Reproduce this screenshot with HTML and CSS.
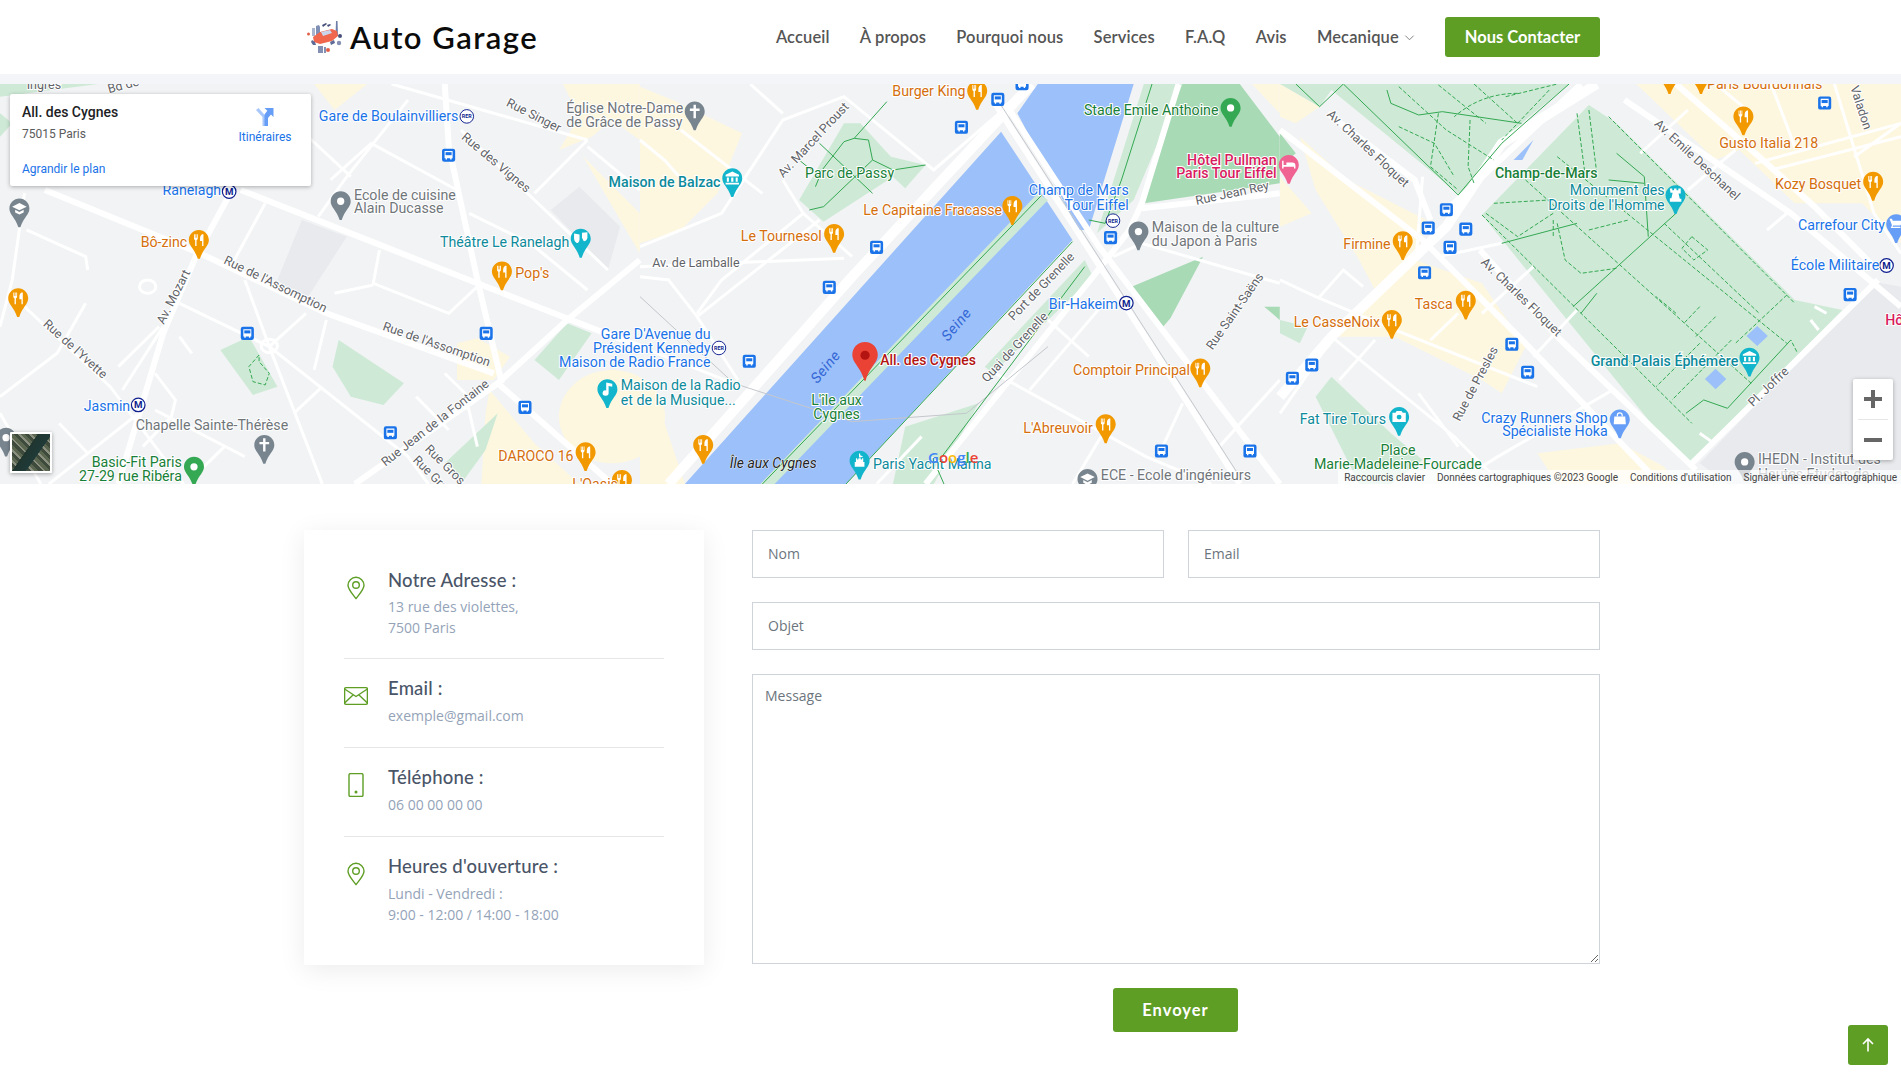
FILE: index.html
```html
<!DOCTYPE html>
<html lang="fr">
<head>
<meta charset="utf-8">
<title>Auto Garage - Contact</title>
<link rel="stylesheet" href="styles.css">
</head>
<body>
<header class="site-header">
  <div class="header-inner">
    <a class="brand" href="#">
      <svg class="brand-logo" viewBox="0 0 36 34" aria-hidden="true">
        <path d="M9 6l3-1 1 2v9H9z" fill="#7f8fb5"/><path d="M5 8h3v8H5z" fill="#a9b4cf"/>
        <path d="M29 1l1.500 0 .5 15h-2.500z" fill="#6d7ea8"/><path d="M15 5l4-2 1 1-4 3z" fill="#47507a"/>
        <path d="M20 5l3-1 1 1-3 2z" fill="#47507a"/>
        <path d="M6 17l7-5 12-3 5 2 1 5-6 5-12 3-6-2z" fill="#f0674d"/>
        <path d="M14 12l9-2 2 3-9 3z" fill="#c9d6ee"/>
        <path d="M5 20l3 2 1 3-3 0-2-3zM23 22l4-2 1 3-4 2z" fill="#5d6b96"/>
        <path d="M11 26h5v7h-5zM17 27h2v6h-2z" fill="#8490b3"/><circle cx="21" cy="30" r="2" fill="#e2604a"/>
        <circle cx="33" cy="16" r="2" fill="#47507a"/><circle cx="32" cy="23" r="2.200" fill="#8490b3"/><circle cx="1.500" cy="14" r="1.500" fill="#e2604a"/>
      </svg>
      <span class="brand-name">Auto Garage</span>
    </a>
    <nav class="nav">
      <a href="#">Accueil</a>
      <a href="#">À propos</a>
      <a href="#">Pourquoi nous</a>
      <a href="#">Services</a>
      <a href="#">F.A.Q</a>
      <a href="#">Avis</a>
      <a href="#" class="dropdown">Mecanique
        <svg class="caret" viewBox="0 0 12 12" aria-hidden="true"><path d="M1.500 4l4.500 4.500L10.500 4" fill="none" stroke="#777" stroke-width="1"/></svg>
      </a>
      <a href="#" class="nav-cta">Nous Contacter</a>
    </nav>
  </div>
</header>

<section class="map-band">
  <div class="map">
    <svg class="map-svg" viewBox="0 84 1901 400" width="1901" height="400" aria-label="Plan">
      <defs>
        <path id="pin" d="M0-8.250C-4.600-8.250-8.250-4.600-8.250 0c0 5 4.600 7 7.400 15.500h1.700C3.650 7 8.250 5 8.250 0 8.250-4.600 4.600-8.250 0-8.250z"/>
        <g id="food"><use href="#pin"/><path fill="#fff" d="M-4-4.800v3.600a1.500 1.500 0 0 0 1 1.400V5h1.100V.2a1.500 1.500 0 0 0 1-1.400v-3.600h-.7v3h-.5v-3h-.7v3h-.5v-3zM2.800-4.800C1.500-4.400 1-2.700 1-1.200v2h1.700V5h1.100v-9.800z"/></g>
        <g id="dot"><use href="#pin"/><circle r="3" fill="#fff"/></g>
        <g id="cap"><use href="#pin"/><path fill="#fff" d="M0-4.500L6-1.500 0 1.500-6-1.500zM-3.500 1v2.200L0 5l3.500-1.800V1L0 2.800z"/></g>
        <g id="cross"><use href="#pin"/><path fill="#fff" d="M-1-5.500h2v3h3v2H1v6h-2v-6h-3v-2h3z"/></g>
        <g id="museum"><use href="#pin"/><path fill="#fff" d="M0-5.500L5.500-2.800v1.300h-11v-1.300zM-4.500-.5h1.700v3.500h-1.700zM-.9-.5H.9v3.500H-.9zM2.800-.5h1.700v3.500H2.800zM-5.500 3.800h11v1.400h-11z"/></g>
        <g id="mask"><use href="#pin"/><path fill="#fff" d="M-5.500-4.500l4.500 1v4c0 2-1.500 3-2 3s-2.500-1.500-2.500-3.500zM1-5l4.500-.5V-1c0 1.500-1.500 3-3 3L1-1z"/></g>
        <g id="music"><use href="#pin"/><path fill="#fff" d="M-1-5.500L4-4.500v2.500L1-2.700V3a2.500 2.200 0 1 1-2-2z"/></g>
        <g id="tower"><use href="#pin"/><path fill="#fff" d="M-4.500-5.500h2v1.500h1.500v-1.500h2v1.500h1.500v-1.500h2v4h-1.800l1 4.500h1.300v2.500h-9.500V2.500h1.300l1-4.500h-1.800z" transform="translate(-.2 0)"/></g>
        <g id="castle"><use href="#pin"/><path fill="#fff" d="M-.5-6h1v1.500L3-3.500l-3 1-.5-.5zM-3-2h1v1h1v-1h2v1h1v-1h1v3h1v4h-8V1h1z"/></g>
        <g id="camera"><use href="#pin"/><path fill="#fff" d="M-5.500-3.500h2.500l1-1.500h4l1 1.500h2.500v7.500h-11z"/><circle cy="0" r="2" fill="currentColor"/></g>
        <g id="bag"><use href="#pin"/><path fill="none" stroke="#fff" stroke-width="1" d="M-2-2.500v-1a2 2 0 0 1 4 0v1"/><path fill="#fff" d="M-4.500-2.500h9l.5 6.500h-10z"/></g>
        <g id="cart"><use href="#pin"/><path fill="#fff" d="M-5.500-4.500h2l.7 1.500h8L3.500 1h-6l-.5 1h6.500v1h-8l1-2.200-2-5.300h-1z"/></g>
        <g id="bed"><use href="#pin"/><path fill="#fff" d="M-5.500-3.500h1.200v3.500h2.300v-2h5c1.500 0 2.500 1 2.500 2.500V3h-1.200V1.500h-8.600V3h-1.200z"/></g>
        <g id="bus"><rect x="-5.400" y="-5.400" width="10.800" height="10.800" rx="1.800" fill="#1a73e8"/><path fill="#fff" d="M-3.300-3.500h6.600v6h-.8v1h-1.200v-1H-1.300v1h-1.200v-1h-.8z"/><path fill="#1a73e8" d="M-2.500-2.500h5V0h-5z"/></g>
        <g id="metro"><circle r="5.600" fill="#fff" stroke="#0f1f8f" stroke-width="1"/><text class="badge-m" y="2.900">M</text></g>
        <g id="rer"><circle r="5.600" fill="#fff" stroke="#0f1f8f" stroke-width=".8"/><text class="badge-r" y="1.700">RER</text></g>
      </defs>

      <rect x="0" y="84" width="1901" height="400" fill="#f1f3f4"/>

      <g transform="translate(0 80) scale(.408 .3333)">
        <path class="yl" d="M1380 12H1568V180L1500 120 1450 170 1370 210 1420 110zM1120 790L1170 775 1250 830 1210 900 1120 900zM1200 930L1310 1090 1420 1212 1180 1212 1190 1000zM770 12H900L820 90zM1430 230L1568 400V520L1420 210z"/>
        <ellipse class="yl" cx="1500" cy="1010" rx="130" ry="140"/>
        <path class="pk" d="M830 780L990 910 940 975 860 950 815 860zM540 810L610 770 680 920 620 945zM1390 730L1450 760 1370 900 1310 840zM1090 1150L1220 1000 1190 1110 1130 1212zM0 12H60L240 12 0 50zM0 100L30 130 0 170z"/>
        <path class="bk" d="M740 420L850 470 750 660 680 600zM1420 320L1520 440 1490 570 1350 390z"/>
        <g class="r2">
          <path d="M590 330L880 470 1170 610 1400 720 1568 800"/>
          <path d="M110 330L490 520 800 700 1210 880"/>
          <path d="M560 350L480 530 400 760 290 1212"/>
          <path d="M1090 12L1100 200 1170 600 1230 910"/>
          <path d="M1568 540L1390 720 1220 910 870 1212"/>
          <path d="M1220 910L1500 1212"/>
        </g>
        <g class="r1">
          <path d="M650 370L570 550"/><path d="M600 600L660 800 790 1212"/><path d="M440 670L660 800 1000 1130 1050 1212"/>
          <path d="M660 800L750 700"/><path d="M800 720L770 870"/><path d="M720 1000L790 920"/>
          <path d="M60 680L270 920 450 1212"/><path d="M0 950L140 820 210 670"/><path d="M60 340L30 600 0 740"/>
          <path d="M290 860L390 740"/><path d="M810 300L910 190 1120 330"/><path d="M1000 60L850 290 780 410"/>
          <path d="M960 12L1440 180"/><path d="M1130 150L1490 570"/><path d="M1440 180L1310 340"/><path d="M1440 200L1568 330"/>
          <path d="M1150 400L1300 490 1440 630"/><path d="M930 510L915 610 1100 700 1170 620"/><path d="M720 130L860 290"/>
          <path d="M65 450L210 530 215 570"/><path d="M820 640L915 615"/><path d="M0 1000L100 1212"/><path d="M300 930L400 740"/>
          <path d="M380 880L430 960 420 1010 350 1100"/><path d="M145 1030L215 1120"/><path d="M120 1212L350 990"/><path d="M470 820L440 770"/>
          <path d="M1090 880L1140 940 1170 1100"/><path d="M1020 950L1100 1050"/><path d="M380 990L600 1130"/><path d="M500 1160L550 1100"/>
        </g>
        <circle class="ring" cx="660" cy="798" r="20"/>
        <circle class="ring" cx="362" cy="620" r="20"/>
        <path class="gd" d="M635 825L610 860 620 905 650 915 660 880 635 845z"/>
      </g>

      <g transform="translate(640 80) scale(.408 .3333)">
        <path class="yl" d="M0 20L80 60 250 160 190 340 100 450 0 490zM0 1000L60 1030 110 1212 0 1212zM1500 12H1568V100z"/>
        <path class="pk" d="M390 360L500 130 540 130 615 230 700 255 650 325 620 290 450 425zM845 860L1090 540 1110 590 865 880zM650 1040L830 970 720 1212 620 1212z"/>
        <path class="pd" d="M1320 12H1470L1568 170V310L1235 370zM1380 530L1205 620 1275 750 1300 715zM1530 680L1568 720V680z"/>
        <path class="wt" d="M110 1212L885 155 1060 480 505 1212zM975 12H1210L1100 450 1075 450 925 100z"/>
        <path class="pk" d="M295 1212L975 340 1000 360 330 1212zM1235 12H1330L1210 360 1120 460z"/>
        <g class="r3">
          <path d="M70 1212L520 590 885 110 960 12"/>
        </g>
        <g class="r2">
          <path d="M870 70L1470 1212"/><path d="M895 70L1125 500 1568 1212"/>
          <path d="M700 1212L1110 590 1200 450 1230 370 1320 12"/>
          <path d="M1230 385L1568 340"/>
        </g>
        <g class="r1">
          <path d="M1160 530L1230 490 1568 610"/><path d="M870 880L1240 1130 1400 1212"/><path d="M955 930L1130 680"/>
          <path d="M1000 720L1100 830"/><path d="M1270 1130L1330 970"/><path d="M1420 1100L1568 900"/><path d="M1130 1070L1060 1212"/>
          <path d="M0 500L200 400 350 120 500 50 720 270 880 100"/><path d="M0 560L500 535"/><path d="M0 590L70 600 140 710 240 900"/>
          <path d="M140 710L440 420"/><path d="M400 400L520 530"/><path d="M350 300L400 400 200 600 140 700"/><path d="M270 12L350 100"/>
          <path d="M0 180L60 240 110 310"/><path d="M100 150L300 340"/><path d="M0 800L250 920"/><path d="M580 1212L690 1070"/>
        </g>
        <path class="rail" d="M0 650L230 910 520 1025 800 1000 1000 800"/>
        <path class="rail" d="M882 70L1470 1190"/>
        <g class="gs">
          <path d="M415 390L450 380 570 240 560 180 525 175 500 185 440 280"/><path d="M440 190L570 340"/><path d="M570 240L620 270 700 255"/>
          <path d="M605 65L525 175"/><path d="M430 320L440 290 380 230"/>
          <path d="M300 1212L985 345"/><path d="M505 1212L1060 485"/><path d="M740 1130L1090 560"/>
          <path d="M1255 12L1180 300 1140 430 1100 420"/><path d="M730 1170L745 1212"/>
        </g>
      </g>

      <g transform="translate(1280 80) scale(.396 .3333)">
        <path class="yl" d="M0 12L100 80 40 130 0 110zM900 12L1100 240 1160 210 1300 370 1470 370 1568 490V12zM50 170L170 300 370 420 340 540 510 610 620 800 560 940 510 900 290 770 140 770 240 630 200 540 90 330zM0 290L80 400 0 440zM650 1120L860 1090 970 1160 1000 1212H700z"/>
        <path class="pk" d="M0 12H730L610 130 455 345 130 30 100 80zM510 405L780 75 850 130 1300 660 1420 690 1040 1150 975 1085zM90 950L130 890 280 1060 360 1140 280 1212H200zM0 720L70 740 50 790 0 760z"/>
        <path class="pd" d="M0 160L40 220 0 260z"/>
        <path class="bk" d="M1568 620L1500 605 1060 1150 1130 1212H1568z"/>
        <path class="wt" d="M590 240L640 180 612 240zM1205 738L1232 768 1205 798 1178 768zM1100 866L1127 897 1100 928 1073 897z"/>
        <g class="r3">
          <path d="M800 12L560 190 420 440 130 770 0 950"/>
        </g>
        <g class="r2">
          <path d="M0 150L360 480 620 790 960 1212"/><path d="M505 510L700 770 1050 1170"/><path d="M120 100L340 300 380 420"/>
          <path d="M1510 600L1040 1150"/><path d="M870 60L1290 400 1568 680"/><path d="M1000 12L1210 230 1350 380 1500 560"/>
          <path d="M760 12L430 380"/>
        </g>
        <g class="r1">
          <path d="M1400 12L1500 400 1568 520"/><path d="M1200 250L1568 130"/><path d="M1240 270L1568 170"/><path d="M1150 210L1030 330"/>
          <path d="M910 220L1030 90"/><path d="M1230 450L1290 390"/><path d="M510 700L640 560"/><path d="M640 830L750 690"/><path d="M380 780L450 700"/>
          <path d="M840 930L550 1130 440 1212"/><path d="M240 780L150 900"/><path d="M360 290L345 520"/><path d="M0 600L90 650 290 750 650 920"/>
          <path d="M130 770L440 1070 560 1212"/><path d="M350 940L450 1100"/><path d="M1100 12L1190 100"/><path d="M1240 12L1300 200"/><path d="M1450 230L1568 130"/>
          <path d="M0 1000L130 780"/><path d="M400 530L560 490"/><path d="M100 650L160 570 210 620"/>
          <path d="M1350 680L1380 700"/><path d="M1340 720L1360 750"/><path d="M1060 1060L1090 1085"/>
        </g>
        <g class="gs">
          <path d="M40 12L100 80 160 12"/><path d="M160 12L450 345 560 190 730 12"/><path d="M270 30L280 70 350 105 410 95 610 130"/>
          <path d="M740 680L1000 400"/><path d="M760 700L800 640"/><path d="M1290 780L1130 985 1070 960 1025 1000"/><path d="M560 490L750 430"/>
          <path d="M850 220L920 290 930 470"/><path d="M830 300L920 310"/>
        </g>
        <g class="gd">
          <path d="M510 405L1040 1030"/><path d="M620 300L1190 910"/><path d="M700 230L1280 790"/><path d="M830 110L1300 670"/><path d="M970 430L1210 700"/>
          <path d="M1000 700L950 650"/><path d="M1060 680L1020 730"/><path d="M1100 710L1050 770"/><path d="M1060 790L950 920"/><path d="M1140 780L990 960"/>
          <path d="M1280 645L1150 790"/><path d="M1305 815L1290 780"/><path d="M400 100L380 260 450 330"/><path d="M480 120L475 260 490 310"/>
          <path d="M520 400L600 470 690 400"/><path d="M700 430L720 540 760 580 850 565"/><path d="M1040 470L1015 505 1045 540 1080 510z"/>
          <path d="M300 140L390 190 440 290"/><path d="M750 100L770 280"/><path d="M780 90L800 280"/><path d="M490 12L600 130"/><path d="M570 50L700 12"/>
          <path d="M540 370L680 360"/><path d="M690 420L690 470"/><path d="M780 450L880 420"/>
          <path d="M300 20L420 150 540 240"/><path d="M400 15L520 130"/><path d="M600 40C520 40 470 80 440 110"/><path d="M680 30L560 180"/>
        </g>
      </g>

      <g transform="scale(1.2124)">
        <g class="poi-o">
          <use href="#food" x="164" y="198"/><use href="#food" x="15" y="246"/><use href="#food" x="414" y="224"/><use href="#food" x="483" y="373"/>
          <use href="#food" x="513" y="396"/><use href="#food" x="580" y="367"/><use href="#food" x="806" y="75"/><use href="#food" x="688" y="193"/>
          <use href="#food" x="835" y="170"/><use href="#food" x="990" y="304"/><use href="#food" x="912" y="350"/><use href="#food" x="1157" y="199"/>
          <use href="#food" x="1209" y="248"/><use href="#food" x="1148" y="264"/><use href="#food" x="1438" y="96"/><use href="#food" x="1545" y="150"/>
          <use href="#food" x="1377" y="62"/><use href="#food" x="1403" y="62"/>
        </g>
        <g class="poi-g">
          <use href="#dot" x="281" y="166"/><use href="#cap" x="16" y="172"/><use href="#cross" x="573" y="92"/><use href="#cross" x="218" y="367"/>
          <use href="#dot" x="5" y="361"/><use href="#dot" x="939" y="191"/><use href="#dot" x="1439" y="381"/><use href="#cap" x="897" y="395"/>
        </g>
        <g class="poi-t">
          <use href="#mask" x="479" y="197"/><use href="#museum" x="604" y="147"/><use href="#music" x="501" y="321"/><use href="#castle" x="709" y="380"/>
          <use href="#tower" x="1382" y="161"/><use href="#museum" x="1443" y="295"/><use href="#camera" x="1154" y="344"/>
        </g>
        <g class="poi-v"><use href="#dot" x="1015" y="89"/><use href="#dot" x="160" y="385"/></g>
        <g class="poi-b"><use href="#bag" x="1336" y="346"/><use href="#cart" x="1564" y="185"/></g>
        <g class="poi-p"><use href="#bed" x="1063" y="136"/></g>

        <g>
          <use href="#bus" x="370" y="128"/><use href="#bus" x="204" y="275"/><use href="#bus" x="401" y="275"/><use href="#bus" x="322" y="357"/>
          <use href="#bus" x="433" y="336"/><use href="#bus" x="618" y="298"/><use href="#bus" x="684" y="237"/><use href="#bus" x="723" y="204"/>
          <use href="#bus" x="793" y="105"/><use href="#bus" x="823" y="82"/><use href="#bus" x="843" y="69"/><use href="#bus" x="916" y="196"/>
          <use href="#bus" x="1175" y="225"/><use href="#bus" x="1193" y="173"/><use href="#bus" x="1178" y="188"/><use href="#bus" x="1209" y="189"/>
          <use href="#bus" x="1196" y="204"/><use href="#bus" x="1247" y="284"/><use href="#bus" x="1260" y="307"/><use href="#bus" x="1082" y="301"/>
          <use href="#bus" x="1066" y="312"/><use href="#bus" x="1031" y="372"/><use href="#bus" x="958" y="372"/><use href="#bus" x="1505" y="85"/>
          <use href="#bus" x="1526" y="243"/>
        </g>
        <use href="#rer" x="385" y="96"/><use href="#metro" x="189" y="158"/><use href="#rer" x="593" y="287"/><use href="#metro" x="114" y="334"/>
        <use href="#metro" x="929" y="250"/><use href="#rer" x="918" y="182"/><use href="#metro" x="1556" y="219"/>

        <g class="rd">
          <text x="184" y="217" transform="rotate(26 184 217)">Rue de l'Assomption</text>
          <text x="315" y="272" transform="rotate(19 315 272)">Rue de l'Assomption</text>
          <text x="135" y="268" transform="rotate(-63 135 268)">Av. Mozart</text>
          <text x="35" y="268" transform="rotate(42 35 268)">Rue de l'Yvette</text>
          <text x="318" y="385" transform="rotate(-38 318 385)">Rue Jean de la Fontaine</text>
          <text x="350" y="371" transform="rotate(45 350 371)">Rue Gros</text>
          <text x="340" y="380" transform="rotate(45 340 380)">Rue Gros</text>
          <text x="417" y="87" transform="rotate(27 417 87)">Rue Singer</text>
          <text x="380" y="114" transform="rotate(40 380 114)">Rue des Vignes</text>
          <text x="646" y="147" transform="rotate(-47 646 147)">Av. Marcel Proust</text>
          <text x="538" y="220">Av. de Lamballe</text>
          <text x="987" y="169" transform="rotate(-12 987 169)">Rue Jean Rey</text>
          <text x="836" y="265" transform="rotate(-46 836 265)">Port de Grenelle</text>
          <text x="814" y="316" transform="rotate(-47 814 316)">Quai de Grenelle</text>
          <text x="1000" y="289" transform="rotate(-55 1000 289)">Rue Saint-Saëns</text>
          <text x="1094" y="95" transform="rotate(43 1094 95)">Av. Charles Floquet</text>
          <text x="1221" y="217" transform="rotate(44 1221 217)">Av. Charles Floquet</text>
          <text x="1364" y="103" transform="rotate(43 1364 103)">Av. Emile Deschanel</text>
          <text x="1204" y="348" transform="rotate(-62 1204 348)">Rue de Presles</text>
          <text x="1446" y="336" transform="rotate(-44 1446 336)">Pl. Joffre</text>
          <text x="1526" y="72" transform="rotate(72 1526 72)">Valadon</text>
          <text x="90" y="77" transform="rotate(-15 90 77)">Bd de</text>
          <text x="22" y="73">Ingres</text>
        </g>
        <g class="lb blue">
          <text x="263" y="100">Gare de Boulainvilliers</text><text x="134" y="161">Ranelagh</text>
          <text class="end" x="586" y="280">Gare D'Avenue du</text><text class="end" x="586" y="291">Président Kennedy</text><text class="end" x="586" y="303">Maison de Radio France</text>
          <text x="69" y="339">Jasmin</text><text x="865" y="255">Bir-Hakeim</text>
          <text class="end" x="931" y="161">Champ de Mars</text><text class="end" x="931" y="173">Tour Eiffel</text>
          <text x="1477" y="223">École Militaire</text><text x="1483" y="190">Carrefour City</text>
          <text class="end" x="1326" y="349">Crazy Runners Shop</text><text class="end" x="1326" y="360">Spécialiste Hoka</text>
        </g>
        <g class="lb orange">
          <text x="116" y="204">Bô-zinc</text><text x="425" y="229">Pop's</text><text x="411" y="380">DAROCO 16</text><text x="736" y="79">Burger King</text>
          <text x="611" y="199">Le Tournesol</text><text x="712" y="177">Le Capitaine Fracasse</text><text x="885" y="309">Comptoir Principal</text>
          <text x="844" y="357">L'Abreuvoir</text><text x="1108" y="205">Firmine</text><text x="1167" y="255">Tasca</text><text x="1067" y="270">Le CasseNoix</text>
          <text x="1418" y="122">Gusto Italia 218</text><text x="1464" y="156">Kozy Bosquet</text><text x="1408" y="73">Paris Bourdonnais</text><text x="472" y="403">L'Oasis</text>
        </g>
        <g class="lb grey">
          <text x="467" y="93">Église Notre-Dame</text><text x="467" y="105">de Grâce de Passy</text>
          <text x="292" y="165">Ecole de cuisine</text><text x="292" y="176">Alain Ducasse</text>
          <text x="112" y="355">Chapelle Sainte-Thérèse</text>
          <text x="950" y="191">Maison de la culture</text><text x="950" y="203">du Japon à Paris</text>
          <text x="1450" y="383">IHEDN - Institut des</text><text x="1450" y="395">Hautes Etudes de</text>
          <text x="908" y="396">ECE - Ecole d'ingénieurs</text>
        </g>
        <g class="lb green">
          <text class="end" x="150" y="385">Basic-Fit Paris</text><text class="end" x="150" y="397">27-29 rue Ribéra</text>
          <text x="894" y="95">Stade Emile Anthoine</text><text x="664" y="147">Parc de Passy</text>
          <text class="mid" x="690" y="334">L'île aux</text><text class="mid" x="690" y="346">Cygnes</text>
          <text class="mid" x="1153" y="375">Place</text><text class="mid" x="1153" y="387">Marie-Madeleine-Fourcade</text>
          <text class="strong" x="1233" y="147">Champ-de-Mars</text>
        </g>
        <g class="lb teal">
          <text class="strong" x="502" y="154">Maison de Balzac</text><text x="363" y="204">Théâtre Le Ranelagh</text>
          <text x="512" y="322">Maison de la Radio</text><text x="512" y="334">et de la Musique...</text>
          <text x="720" y="387">Paris Yacht Marina</text>
          <text class="end" x="1373" y="161">Monument des</text><text class="end" x="1373" y="173">Droits de l'Homme</text>
          <text class="strong" x="1312" y="302">Grand Palais Éphémère</text><text x="1072" y="350">Fat Tire Tours</text>
        </g>
        <g class="lb pink">
          <text class="end strong" x="1053" y="136">Hôtel Pullman</text><text class="end strong" x="1053" y="147">Paris Tour Eiffel</text>
          <text class="strong" x="1555" y="268">Hôtel</text>
        </g>
        <g class="seine">
          <text x="674" y="317" transform="rotate(-50 674 317)">Seine</text>
          <text x="782" y="282" transform="rotate(-50 782 282)">Seine</text>
        </g>
        <text class="isle" x="602" y="386">Île aux Cygnes</text>
        <text class="lb-red" x="726" y="301">All. des Cygnes</text>
        <path d="M713.500 282c-6.200 0-10.500 5-10.500 10.500 0 7 7 10 10 21.500h1c3-11.500 10-14.500 10-21.500 0-5.500-4.300-10.500-10.500-10.500z" fill="#ea4335"/>
        <circle cx="713.500" cy="293" r="3.800" fill="#b31412"/>
      </g>

      <text class="gl" x="928" y="463"><tspan class="g-b">G</tspan><tspan class="g-r">o</tspan><tspan class="g-y">o</tspan><tspan class="g-b">g</tspan><tspan class="g-g">l</tspan><tspan class="g-r">e</tspan></text>
    </svg>

    <div class="info-card">
      <div class="info-main">
        <div class="info-title">All. des Cygnes</div>
        <div class="info-addr">75015 Paris</div>
        <a class="info-link" href="#">Agrandir le plan</a>
      </div>
      <a class="info-dir" href="#">
        <svg class="dir-icon" viewBox="0 0 18 18" aria-hidden="true">
          <path d="M1 2l6.500 7v9h3.500V8.500L3.500 0z" fill="#a8c7fa" transform="translate(-1 0)"/>
          <path d="M7 18h3.500v-8l3-3.500 2.500 2.500V0H7l2.800 2.800L7 6.500z" fill="#669df6" transform="translate(1.500 0)"/>
        </svg>
        <span>Itinéraires</span>
      </a>
    </div>
    <div class="sat-thumb"></div>
    <div class="zoom-ctrl">
      <button class="zoom-btn" type="button" aria-label="Zoom avant"><svg viewBox="0 0 18 18"><path d="M7 0h4v7h7v4h-7v7H7v-7H0V7h7z" fill="#666"/></svg></button>
      <span class="zoom-sep"></span>
      <button class="zoom-btn" type="button" aria-label="Zoom arrière"><svg viewBox="0 0 18 18"><path d="M0 7h18v4H0z" fill="#666"/></svg></button>
    </div>
    <div class="attrib">
      <span>Raccourcis clavier</span><span>Données cartographiques ©2023 Google</span><span>Conditions d'utilisation</span><span>Signaler une erreur cartographique</span>
    </div>
  </div>
</section>

<main class="contact">
  <aside class="contact-card">
    <div class="info-row">
      <svg class="ci" viewBox="0 0 24 24" aria-hidden="true"><path d="M12 22.500C8 17.500 4 13.500 4 9.300a8 8 0 0 1 16 0c0 4.200-4 8.200-8 13.200z"/><circle cx="12" cy="9" r="3.300"/></svg>
      <div class="info-text"><h3>Notre Adresse :</h3><p>13 rue des violettes,<br>7500 Paris</p></div>
    </div>
    <div class="info-row">
      <svg class="ci" viewBox="0 0 24 24" aria-hidden="true"><rect x=".6" y="3.600" width="22.800" height="16.800" rx="1.500"/><path d="M.6 5L12 12.500 23.400 5M.6 19L9 11M23.400 19L15 11"/></svg>
      <div class="info-text"><h3>Email :</h3><p>exemple@gmail.com</p></div>
    </div>
    <div class="info-row">
      <svg class="ci" viewBox="0 0 24 24" aria-hidden="true"><rect x="5" y=".6" width="14" height="22.800" rx="1.500"/><circle class="fill" cx="12" cy="19" r=".8"/></svg>
      <div class="info-text"><h3>Téléphone :</h3><p>06 00 00 00 00</p></div>
    </div>
    <div class="info-row">
      <svg class="ci" viewBox="0 0 24 24" aria-hidden="true"><path d="M12 22.500C8 17.500 4 13.500 4 9.300a8 8 0 0 1 16 0c0 4.200-4 8.200-8 13.200z"/><circle cx="12" cy="9" r="3.300"/></svg>
      <div class="info-text"><h3>Heures d'ouverture :</h3><p>Lundi - Vendredi :<br>9:00 - 12:00 / 14:00 - 18:00</p></div>
    </div>
  </aside>

  <form class="contact-form">
    <div class="form-grid">
      <input class="field" type="text" placeholder="Nom">
      <input class="field" type="email" placeholder="Email">
      <input class="field span" type="text" placeholder="Objet">
      <textarea class="field area span" placeholder="Message"></textarea>
    </div>
    <div class="form-actions"><button class="send" type="button">Envoyer</button></div>
  </form>
</main>

<a class="to-top" href="#" aria-label="Haut de page">
  <svg viewBox="0 0 16 16"><path d="M8 14.500V2M3 7l5-5 5 5" fill="none" stroke="#fff" stroke-width="1.600"/></svg>
</a>
</body>
</html>
```

FILE: styles.css
```css
* { box-sizing: border-box; }
html, body { margin: 0; padding: 0; }
body {
  background: #fff;
  font-family: "Open Sans", sans-serif;
  font-size: 14px;
  color: #4b5563;
  height: 1080px;
  overflow: hidden;
}
a { text-decoration: none; color: inherit; }

.site-header { height: 74px; background: #fff; }
.header-inner {
  margin: 0 301px 0 304px;
  height: 100%;
  display: flex;
  align-items: center;
  justify-content: space-between;
}
.brand { display: flex; align-items: center; gap: 7px; padding-left: 3px; }
.brand-logo { width: 36px; height: 34px; flex: none; }
.brand-name {
  font-family: "Lato", sans-serif;
  font-size: 31px;
  font-weight: 600;
  letter-spacing: 1.450px;
  color: #0b0b0b;
}
.nav {
  display: flex;
  align-items: center;
  gap: 30.200px;
  font-family: "Lato", sans-serif;
  font-size: 16.500px;
  font-weight: 600;
  letter-spacing: .12px;
  color: #555;
}
.dropdown { display: flex; align-items: center; gap: 5px; }
.caret { width: 11px; height: 11px; }
.nav-cta {
  width: 155px;
  height: 40px;
  display: flex;
  align-items: center;
  justify-content: center;
  background: #5e9e25;
  border-radius: 3px;
  color: #fff;
  font-weight: 700;
  letter-spacing: 0;
}

.map-band { padding-top: 10px; background: #f3f5f8; }
.map { position: relative; height: 400px; overflow: hidden; background: #f1f3f4; }
.map-svg { display: block; font-family: "Roboto", sans-serif; }

.yl { fill: #fef7e0; }
.pk { fill: #ceead6; }
.pd { fill: #a8dab5; }
.wt { fill: #9cc0f9; }
.bk { fill: #e8eaed; }
.r1 path, .r2 path, .r3 path, .ring, .rail, .gs path, .gd, .gd path {
  fill: none;
  vector-effect: non-scaling-stroke;
}
.r1 path { stroke: #fff; stroke-width: 3px; }
.r2 path { stroke: #fff; stroke-width: 6px; }
.r3 path { stroke: #fff; stroke-width: 10px; }
.ring { stroke: #fff; stroke-width: 3px; }
.rail { stroke: #c4c7cc; stroke-width: 1px; }
.gs path { stroke: #34a853; stroke-width: 1px; }
.gd, .gd path { stroke: #34a853; stroke-width: 1px; stroke-dasharray: 4 2; }

.poi-o { fill: #f29900; color: #f29900; }
.poi-g { fill: #78858f; color: #78858f; }
.poi-t { fill: #12b5cb; color: #12b5cb; }
.poi-v { fill: #34a853; color: #34a853; }
.poi-b { fill: #669df6; color: #669df6; }
.poi-p { fill: #f06292; color: #f06292; }

.badge-m { font-size: 8px; font-weight: 700; text-anchor: middle; fill: #0f1f8f; }
.badge-r { font-size: 4.400px; font-weight: 700; text-anchor: middle; fill: #0f1f8f; }

.rd text {
  font-size: 10.300px;
  fill: #5f6368;
  stroke: #fff;
  stroke-width: 1.600px;
  paint-order: stroke;
}
.lb text {
  font-size: 11.700px;
  stroke: #fff;
  stroke-width: 1.600px;
  paint-order: stroke;
}
.lb .end { text-anchor: end; }
.lb .mid { text-anchor: middle; }
.lb .strong { font-weight: 500; }
.blue text { fill: #1a73e8; }
.orange text { fill: #d56e0c; }
.grey text { fill: #70757a; }
.green text { fill: #188038; }
.teal text { fill: #0d8a9b; }
.pink text { fill: #d81b60; }
.seine text { font-size: 12px; font-style: italic; fill: #3367d6; letter-spacing: .5px; }
.isle {
  font-size: 11.500px;
  font-style: italic;
  fill: #202124;
  stroke: #fff;
  stroke-width: .6px;
  paint-order: stroke;
}
.lb-red {
  font-size: 11.500px;
  font-weight: 500;
  fill: #b31412;
  stroke: #fff;
  stroke-width: 1.600px;
  paint-order: stroke;
}
.gl { font-family: "Open Sans", sans-serif; font-size: 15px; font-weight: 600; }
.g-b { fill: #4285f4; }
.g-r { fill: #ea4335; }
.g-y { fill: #fbbc05; }
.g-g { fill: #34a853; }

.info-card {
  position: absolute;
  left: 10px;
  top: 10px;
  width: 301px;
  height: 92px;
  padding: 9px 12px;
  display: flex;
  justify-content: space-between;
  background: #fff;
  border-radius: 2px;
  box-shadow: 0 1px 4px rgba(0, 0, 0, .3);
  font-family: "Roboto", sans-serif;
}
.info-title { font-size: 14px; font-weight: 500; line-height: 18px; color: #202124; }
.info-addr { margin-top: 5px; font-size: 12px; line-height: 16px; color: #5b5b5b; }
.info-link { display: block; margin-top: 19px; font-size: 12px; line-height: 16px; color: #1a73e8; }
.info-dir {
  width: 60px;
  margin-right: 4px;
  display: flex;
  flex-direction: column;
  align-items: center;
  font-size: 12px;
  line-height: 16px;
  color: #1a73e8;
}
.dir-icon { width: 18px; height: 18px; margin: 5px 0 3px; }
.sat-thumb {
  position: absolute;
  left: 10px;
  top: 348px;
  width: 42px;
  height: 41px;
  border: 2px solid #fff;
  border-radius: 1px;
  background:
    linear-gradient(125deg, transparent 40%, #20352f 41%, #1f3a38 62%, transparent 63%),
    repeating-linear-gradient(45deg, #5a6650 0 3px, #3e4a3c 3px 6px, #8a8f80 6px 8px);
  box-shadow: 0 1px 4px rgba(0, 0, 0, .35);
}
.zoom-ctrl {
  position: absolute;
  right: 8px;
  top: 295px;
  width: 40px;
  height: 81px;
  display: flex;
  flex-direction: column;
  align-items: center;
  background: #fff;
  border-radius: 2px;
  box-shadow: 0 1px 4px rgba(0, 0, 0, .3);
}
.zoom-btn { flex: 1; width: 100%; padding: 0; border: 0; background: none; display: flex; align-items: center; justify-content: center; }
.zoom-btn svg { width: 18px; height: 18px; }
.zoom-sep { width: 30px; height: 1px; background: #e6e6e6; }
.attrib {
  position: absolute;
  right: 0;
  bottom: 0;
  height: 14px;
  display: flex;
  align-items: center;
  gap: 12px;
  padding: 0 4px 0 6px;
  background: rgba(255, 255, 255, .7);
  font-family: "Roboto", sans-serif;
  font-size: 10px;
  color: #444;
  white-space: nowrap;
}

.contact {
  margin: 46px 301px 0 304px;
  display: grid;
  grid-template-columns: 400px 848px;
  gap: 48px;
  align-items: start;
}
.contact-card {
  height: 435px;
  padding: 38px 40px 0;
  background: #fff;
  box-shadow: 0 5px 25px rgba(0, 0, 0, .08);
}
.info-row {
  display: flex;
  gap: 20px;
  padding: 17px 0 21px;
  border-bottom: 1px solid #e4e6e8;
}
.info-row:first-child { padding-top: 0; padding-bottom: 20px; }
.info-row:last-child { border-bottom: 0; padding-bottom: 0; }
.ci {
  width: 24px;
  height: 24px;
  flex: none;
  margin-top: 8px;
  fill: none;
  stroke: #5e9e25;
  stroke-width: 1.400px;
}
.ci .fill { fill: #5e9e25; }
.info-text h3 {
  margin: 0 0 5px;
  font-family: "Lato", sans-serif;
  font-size: 18.500px;
  font-weight: 500;
  line-height: 24px;
  letter-spacing: .2px;
  color: #4a5568;
}
.info-row:first-child h3 { margin-bottom: 4px; }
.info-text p { margin: 0; font-size: 14px; line-height: 21px; color: #94a3b8; }

.form-grid { display: grid; grid-template-columns: 412px 412px; gap: 24px; }
.span { grid-column: 1 / -1; }
.field {
  display: block;
  width: 100%;
  height: 48px;
  padding: 0 15px 2px;
  border: 1px solid #ced4da;
  border-radius: 0;
  background: #fff;
  font-family: "Open Sans", sans-serif;
  font-size: 14px;
  color: #495057;
  outline: 0;
}
.field::placeholder { color: #6c757d; opacity: 1; }
.area { height: 290px; padding: 10px 12px; resize: both; line-height: 21px; }
.form-actions { display: flex; justify-content: center; margin-top: 24px; padding-right: 1px; }
.send {
  width: 125px;
  height: 44px;
  border: 0;
  border-radius: 3px;
  background: #5e9e25;
  color: #fff;
  font-family: "Lato", sans-serif;
  font-size: 16.500px;
  font-weight: 700;
  letter-spacing: 1px;
}
.to-top {
  position: fixed;
  right: 13px;
  bottom: 15px;
  width: 40px;
  height: 40px;
  display: flex;
  align-items: center;
  justify-content: center;
  background: #5e9e25;
  border-radius: 3px;
}
.to-top svg { width: 16px; height: 16px; }
```
